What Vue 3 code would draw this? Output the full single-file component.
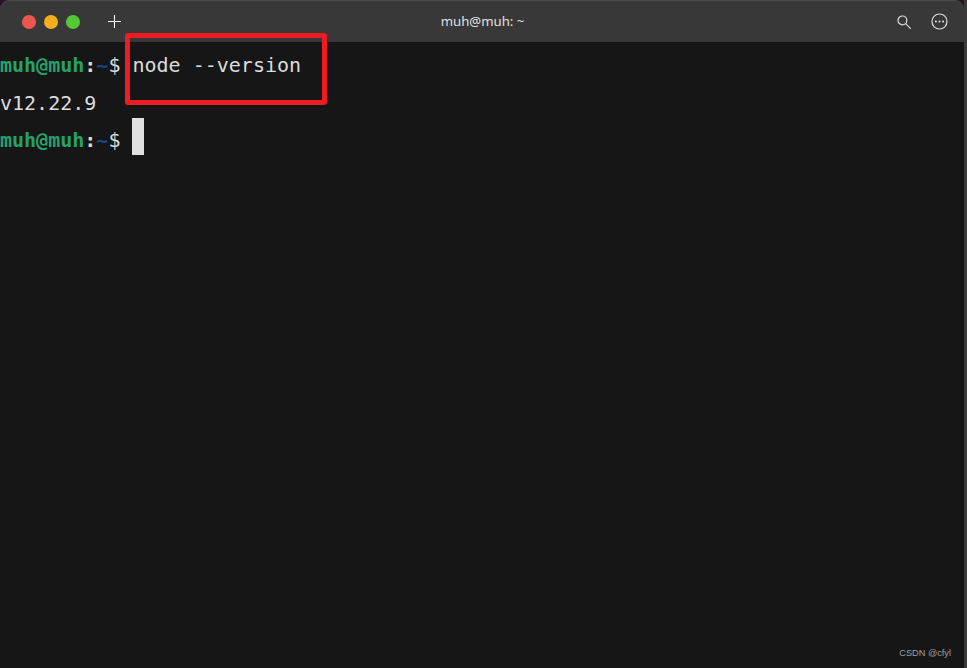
<script setup>
const lines = [
  { id: 1, prompt: true, text: 'node --version' },
  { id: 2, prompt: false, text: 'v12.22.9' },
  { id: 3, prompt: true, text: '', cursor: true },
]
</script>

<template>
  <div class="window">
    <header class="titlebar">
      <div class="left">
        <span class="dot red"></span>
        <span class="dot yellow"></span>
        <span class="dot green"></span>
        <svg class="plus" width="13" height="13" viewBox="0 0 13 13">
          <path d="M6.5 0v13M0 6.5h13" stroke="#f2f2f2" stroke-width="1.1" fill="none" />
        </svg>
      </div>
      <div class="title">muh@muh: ~</div>
      <div class="right">
        <svg width="14" height="14" viewBox="0 0 14 14" fill="none" stroke="#dcdcdc" stroke-width="1.2">
          <circle cx="5.4" cy="5.4" r="4.4" />
          <path d="M8.6 8.6 13.4 13.4" stroke-linecap="round" />
        </svg>
        <svg width="17" height="17" viewBox="0 0 17 17" fill="none">
          <circle cx="8.5" cy="8.5" r="7.5" stroke="#dcdcdc" stroke-width="1.2" />
          <circle cx="4.9" cy="8.5" r="1" fill="#e6e6e6" />
          <circle cx="8.5" cy="8.5" r="1" fill="#e6e6e6" />
          <circle cx="12.1" cy="8.5" r="1" fill="#e6e6e6" />
        </svg>
      </div>
    </header>
    <main class="terminal">
      <div v-for="line in lines" :key="line.id" class="line">
        <template v-if="line.prompt">
          <span class="host">muh@muh</span><span class="colon">:</span><span class="path">~</span><span>$ </span>
        </template>
        <span class="cmd">{{ line.text }}</span>
        <span v-if="line.cursor" class="cursor"></span>
      </div>
      <div class="highlight"></div>
      <div class="mark">CSDN @cfyl</div>
    </main>
  </div>
</template>

<style scoped>
.window {
  width: 964px;
  height: 668px;
  display: flex;
  flex-direction: column;
  background: #2c1024;
}
.titlebar {
  height: 43px;
  flex: none;
  display: grid;
  grid-template-columns: 1fr auto 1fr;
  align-items: center;
  background: #383838;
  border-top: 1px solid #4a4a4a;
  border-bottom: 1px solid #141414;
  box-sizing: border-box;
  border-radius: 9px 9px 0 0;
}
.left {
  display: flex;
  align-items: center;
  padding-left: 22px;
}
.dot {
  width: 14px;
  height: 14px;
  border-radius: 50%;
  margin-right: 8px;
}
.red { background: #ee5650; }
.yellow { background: #f3b01c; }
.green { background: #56c834; }
.plus { margin-left: 20px; }
.title {
  font: 13.2px/1 "Noto Sans", sans-serif;
  color: #e0e0e0;
  padding-left: 1px;
}
.right {
  display: flex;
  align-items: center;
  justify-content: flex-end;
  gap: 20px;
  padding-right: 16px;
}
.terminal {
  flex: 1;
  position: relative;
  padding-top: 4px;
  background: #161616;
  font: 20px/37.5px "DejaVu Sans Mono", monospace;
  color: #dcdcdc;
}
.line {
  height: 37.5px;
  white-space: pre;
  display: flex;
  align-items: center;
}
.host { color: #26a269; font-weight: 700; }
.colon { color: #dcdcdc; font-weight: 700; }
.path { color: #12488b; font-weight: 700; }
.cursor {
  width: 12px;
  height: 37px;
  align-self: flex-start;
  margin-top: -4px;
  background: #e0e0e0;
}
.highlight {
  position: absolute;
  left: 125px;
  top: -10px;
  width: 202px;
  height: 72px;
  box-sizing: border-box;
  border: 5px solid #ed1c24;
  border-radius: 3px;
}
.mark {
  position: absolute;
  right: 13px;
  bottom: 10px;
  font: 9.2px/1 "Liberation Sans", sans-serif;
  color: #a0a0a0;
}
</style>

<style>
html, body {
  background: #3a3a3a;
}
</style>
